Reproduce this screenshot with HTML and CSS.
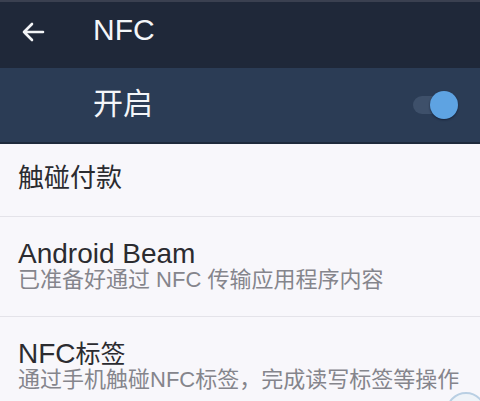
FILE: index.html
```html
<!DOCTYPE html>
<html lang="zh-CN">
<head>
<meta charset="utf-8">
<link rel="stylesheet" href="styles.css">
</head>
<body>
<div class="screen">
  <header class="appbar">
    <svg class="back" width="24" height="20" viewBox="0 0 24 20">
      <path d="M22 10H3M11 2L3 10L11 18" fill="none" stroke="#f2f4f7" stroke-width="2.6" stroke-linecap="round" stroke-linejoin="round"/>
    </svg>
    <div class="title">NFC</div>
  </header>
  <div class="switchbar">
    <div class="switch-label">开启</div>
    <div class="toggle"><span class="track"></span><span class="knob"></span></div>
  </div>
  <div class="list">
    <div class="row single"><div class="row-title">触碰付款</div></div>
    <div class="row double">
      <div class="row-title latin">Android Beam</div>
      <div class="row-sub">已准备好通过 NFC 传输应用程序内容</div>
    </div>
    <div class="row double last">
      <div class="row-title">NFC<span class="cjk">标签</span></div>
      <div class="row-sub">通过手机触碰NFC标签，完成读写标签等操作</div>
    </div>
  </div>
  <div class="fab"></div>
</div>
</body>
</html>
```
FILE: styles.css
```css
html, body {
  margin: 0;
  padding: 0;
}
body {
  width: 480px;
  height: 401px;
  overflow: hidden;
  background: #f8f7fb;
  font-family: "Liberation Sans", "Noto Sans CJK SC", sans-serif;
}
.screen {
  position: relative;
  width: 480px;
  height: 401px;
  overflow: hidden;
}
.appbar {
  border-top: 2px solid #3a4050;
  background: #1f2839;
  display: flex;
  align-items: flex-start;
  box-sizing: border-box;
  height: 68px;
}
.back {
  margin: 20px 0 0 21px;
  flex: none;
}
.title {
  margin: 11px 0 0 48px;
  font-size: 30px;
  line-height: 34px;
  color: #f4f6f9;
}
.switchbar {
  height: 74px;
  background: #2b3c55;
  border-bottom: 2px solid #1e2a3c;
  display: flex;
  align-items: center;
  justify-content: space-between;
  padding: 0 22px 0 93px;
}
.switch-label {
  font-size: 30px;
  line-height: 34px;
  color: #f4f6f9;
  margin-top: -2px;
}
.toggle {
  position: relative;
  width: 45px;
  height: 28px;
}
.track {
  position: absolute;
  left: 0;
  top: 5px;
  width: 36px;
  height: 18px;
  border-radius: 9px;
  background: #3e506a;
}
.knob {
  position: absolute;
  right: 0;
  top: 0;
  width: 28px;
  height: 28px;
  border-radius: 50%;
  background: #5ea3e2;
  box-shadow: 0 1px 2px #15223a;
}
.list {
  background: #f8f7fb;
}
.row {
  padding-left: 18px;
  border-bottom: 1px solid #e4e3e9;
  box-sizing: border-box;
}
.row.single {
  height: 73px;
  display: flex;
  align-items: center;
}
.row.double {
  height: 100px;
  padding-top: 23px;
}
.row.last {
  border-bottom: none;
}
.row-title {
  font-size: 28px;
  line-height: 28px;
  color: #2b2b30;
}
.row-title .cjk {
  font-size: 25px;
}
.row.single .row-title {
  font-size: 26px;
  margin-top: -4px;
}
.row-sub {
  font-size: 22px;
  line-height: 26px;
  color: #85858c;
  margin-top: -1px;
  white-space: nowrap;
}
.fab {
  position: absolute;
  left: 446px;
  top: 392px;
  width: 40px;
  height: 40px;
  border-radius: 50%;
  background: #eef3f8;
  border: 2px solid #b9cfe3;
  box-sizing: border-box;
}
```
